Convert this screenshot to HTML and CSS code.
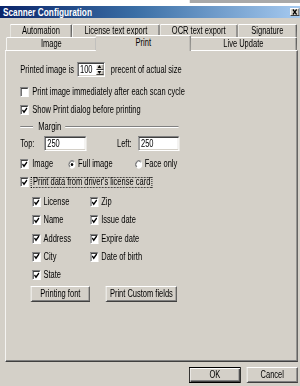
FILE: index.html
```html
<!DOCTYPE html>
<html>
<head>
<meta charset="utf-8">
<link rel="stylesheet" href="styles.css">
</head>
<body>
<div class="window">
<div class="stage">
  <div class="topstrip"><div class="topline"></div></div>
  <div class="titlebar">
    <span class="title">Scanner Configuration</span>
    <span class="close"><svg width="10" height="6" viewBox="0 0 10 6"><path d="M2.5 0.5 L7.5 5.5 M7.5 0.5 L2.5 5.5" stroke="#000" stroke-width="1.6"/></svg></span>
  </div>
  <div class="tabs">
    <div class="tabrow back">
      <div class="tab t-auto">Automation</div>
      <div class="tab t-lic">License text export</div>
      <div class="tab t-ocr">OCR text export</div>
      <div class="tab t-sig">Signature</div>
    </div>
    <div class="tabrow front">
      <div class="tab t-img">Image</div>
      <div class="tab t-print active">Print</div>
      <div class="tab t-live">Live Update</div>
    </div>
  </div>
  <div class="panel">
    <div class="row row-size">
      <span>Printed image is</span>
      <div class="field spin">
        <span class="val">100</span>
        <div class="spinbtns">
          <div class="sb"><svg width="5" height="3" viewBox="0 0 5 3"><path d="M0 3 L2.5 0 L5 3 Z" fill="#000"/></svg></div>
          <div class="sb"><svg width="5" height="3" viewBox="0 0 5 3"><path d="M0 0 L2.5 3 L5 0 Z" fill="#000"/></svg></div>
        </div>
      </div>
      <span>precent of actual size</span>
    </div>
    <div class="cb row-imm"><span class="box"></span><span>Print image immediately after each scan cycle</span></div>
    <div class="cb row-dlg"><span class="box"><svg class="chk" viewBox="0 0 8 7" preserveAspectRatio="none"><path d="M1 3 L3 5.2 L7 1" stroke="#000" stroke-width="1.7" fill="none"/></svg></span><span>Show Print dialog before printing</span></div>
    <div class="sep"><span class="line l1"></span><span class="seplabel">Margin</span><span class="line l2"></span></div>
    <div class="row row-margin">
      <span class="lbl-top">Top:</span><div class="field f-top"><span class="val">250</span></div>
      <span class="lbl-left">Left:</span><div class="field f-left"><span class="val">250</span></div>
    </div>
    <div class="row row-img">
      <div class="grp g1"><span class="box"><svg class="chk" viewBox="0 0 8 7" preserveAspectRatio="none"><path d="M1 3 L3 5.2 L7 1" stroke="#000" stroke-width="1.7" fill="none"/></svg></span><span>Image</span></div>
      <div class="grp g2"><svg class="radio" viewBox="0 0 12 12" preserveAspectRatio="none"><circle cx="6" cy="6" r="5.5" fill="#fff"/><path d="M2.1 9.9 A5.5 5.5 0 0 1 9.9 2.1" stroke="#808080" fill="none"/><path d="M2.8 9.2 A4.5 4.5 0 0 1 9.2 2.8" stroke="#404040" fill="none"/><circle cx="6" cy="6" r="2" fill="#000"/></svg><span>Full image</span></div>
      <div class="grp g3"><svg class="radio" viewBox="0 0 12 12" preserveAspectRatio="none"><circle cx="6" cy="6" r="5.5" fill="#fff"/><path d="M2.1 9.9 A5.5 5.5 0 0 1 9.9 2.1" stroke="#808080" fill="none"/><path d="M2.8 9.2 A4.5 4.5 0 0 1 9.2 2.8" stroke="#404040" fill="none"/></svg><span>Face only</span></div>
    </div>
    <div class="cb row-data"><span class="box"><svg class="chk" viewBox="0 0 8 7" preserveAspectRatio="none"><path d="M1 3 L3 5.2 L7 1" stroke="#000" stroke-width="1.7" fill="none"/></svg></span><span class="focus">Print data from driver's license card</span></div>
    <div class="grid">
      <div class="cb"><span class="box"><svg class="chk" viewBox="0 0 8 7" preserveAspectRatio="none"><path d="M1 3 L3 5.2 L7 1" stroke="#000" stroke-width="1.7" fill="none"/></svg></span><span>License</span></div>
      <div class="cb"><span class="box"><svg class="chk" viewBox="0 0 8 7" preserveAspectRatio="none"><path d="M1 3 L3 5.2 L7 1" stroke="#000" stroke-width="1.7" fill="none"/></svg></span><span>Zip</span></div>
      <div class="cb"><span class="box"><svg class="chk" viewBox="0 0 8 7" preserveAspectRatio="none"><path d="M1 3 L3 5.2 L7 1" stroke="#000" stroke-width="1.7" fill="none"/></svg></span><span>Name</span></div>
      <div class="cb"><span class="box"><svg class="chk" viewBox="0 0 8 7" preserveAspectRatio="none"><path d="M1 3 L3 5.2 L7 1" stroke="#000" stroke-width="1.7" fill="none"/></svg></span><span>Issue date</span></div>
      <div class="cb"><span class="box"><svg class="chk" viewBox="0 0 8 7" preserveAspectRatio="none"><path d="M1 3 L3 5.2 L7 1" stroke="#000" stroke-width="1.7" fill="none"/></svg></span><span>Address</span></div>
      <div class="cb"><span class="box"><svg class="chk" viewBox="0 0 8 7" preserveAspectRatio="none"><path d="M1 3 L3 5.2 L7 1" stroke="#000" stroke-width="1.7" fill="none"/></svg></span><span>Expire date</span></div>
      <div class="cb"><span class="box"><svg class="chk" viewBox="0 0 8 7" preserveAspectRatio="none"><path d="M1 3 L3 5.2 L7 1" stroke="#000" stroke-width="1.7" fill="none"/></svg></span><span>City</span></div>
      <div class="cb"><span class="box"><svg class="chk" viewBox="0 0 8 7" preserveAspectRatio="none"><path d="M1 3 L3 5.2 L7 1" stroke="#000" stroke-width="1.7" fill="none"/></svg></span><span>Date of birth</span></div>
      <div class="cb"><span class="box"><svg class="chk" viewBox="0 0 8 7" preserveAspectRatio="none"><path d="M1 3 L3 5.2 L7 1" stroke="#000" stroke-width="1.7" fill="none"/></svg></span><span>State</span></div>
    </div>
    <div class="btnrow">
      <div class="btn b-font">Printing font</div>
      <div class="btn b-custom">Print Custom fields</div>
    </div>
  </div>
  <div class="footer">
    <div class="btn default b-ok">OK</div>
    <div class="btn b-cancel">Cancel</div>
  </div>
</div>
</div>
</body>
</html>
```

FILE: styles.css
```css
html, body {
  margin: 0;
  padding: 0;
}
body {
  width: 300px;
  height: 386px;
  overflow: hidden;
  background: #d4d0c8;
  font-family: "Liberation Sans", Arial, sans-serif;
  font-size: 10px;
  line-height: 1;
  color: #000;
}
.window {
  width: 300px;
  height: 386px;
  overflow: hidden;
}
.stage {
  width: 400px;
  height: 386px;
  transform: scaleX(0.75);
  transform-origin: 0 0;
  display: flex;
  flex-direction: column;
}
.topstrip {
  height: 6px;
  background: #fff;
  display: flex;
  flex: none;
}
.topline {
  margin-left: 253px;
  flex: 1;
  height: 3px;
  background: #a9a9a9;
}
.titlebar {
  flex: none;
  height: 12px;
  box-sizing: border-box;
  padding: 0 1px 0 4px;
  background: linear-gradient(to right, #0a246a 0%, #3a6ea5 45%, #a6caf0 100%);
  display: flex;
  align-items: center;
  justify-content: space-between;
}
.title {
  color: #fff;
  font-weight: bold;
  font-size: 11px;
  line-height: 12px;
}
.close {
  width: 12px;
  height: 8px;
  box-sizing: border-box;
  background: #d4d0c8;
  border: 1px solid;
  border-color: #fff #404040 #404040 #fff;
  display: flex;
  align-items: center;
  justify-content: center;
}
.close svg { display: block; }
.tabs {
  flex: none;
  margin-top: 6px;
}
.tabrow {
  display: flex;
  height: 13px;
}
.back { padding-left: 13px; }
.front { padding-left: 8px; }
.tab {
  box-sizing: border-box;
  height: 13px;
  border-left: 1px solid #fff;
  border-top: 1px solid #fff;
  border-right: 1px solid #404040;
  box-shadow: inset -1px 0 #808080;
  border-radius: 2px 2px 0 0;
  display: flex;
  align-items: center;
  justify-content: center;
  background: #d4d0c8;
  flex: none;
}
.t-auto { width: 83px; }
.t-lic { width: 117px; }
.t-ocr { width: 104px; }
.t-sig { width: 79px; }
.t-img { width: 121px; }
.t-print { width: 124px; }
.t-live { width: 143px; }
.tab.active {
  width: 128px;
  height: 16px;
  margin: -2px -2px -1px -2px;
  padding-bottom: 1px;
  z-index: 2;
  position: relative;
}
.panel {
  flex: none;
  box-sizing: border-box;
  margin-left: 7px;
  width: 390px;
  height: 312px;
  border-left: 1px solid #fff;
  border-top: 1px solid #fff;
  border-right: 1px solid #404040;
  border-bottom: 1px solid #404040;
  box-shadow: inset -1px -1px #808080;
  padding-left: 19px;
  display: flex;
  flex-direction: column;
}
.row {
  display: flex;
  align-items: center;
  height: 15px;
  flex: none;
}
.row-size { margin-top: 11px; }
.field {
  box-sizing: border-box;
  height: 15px;
  background: #fff;
  border: 1px solid;
  border-color: #808080 #fff #fff #808080;
  box-shadow: inset 1px 1px #404040, inset -1px -1px #d4d0c8;
  display: flex;
  align-items: center;
}
.val { padding-left: 3px; flex: 1; }
.spin {
  width: 37px;
  margin: 0 8px 0 4px;
  align-items: stretch;
}
.spin .val { display: flex; align-items: center; }
.spinbtns {
  width: 10px;
  display: flex;
  flex-direction: column;
  padding: 1px 1px 1px 0;
}
.sb {
  flex: 1;
  box-sizing: border-box;
  background: #d4d0c8;
  border: 1px solid;
  border-color: #fff #404040 #404040 #fff;
  display: flex;
  align-items: center;
  justify-content: center;
}
.sb svg { display: block; }
.cb {
  display: flex;
  align-items: center;
  height: 12px;
  flex: none;
}
.box {
  width: 11px;
  height: 10px;
  box-sizing: border-box;
  background: #fff;
  border: 1px solid;
  border-color: #808080 #fff #fff #808080;
  box-shadow: inset 1px 1px #404040;
  margin-right: 5px;
  flex: none;
  display: flex;
  align-items: center;
  justify-content: center;
}
.chk {
  width: 8px;
  height: 7px;
  display: block;
}
.row-imm { margin-top: 9px; }
.row-dlg { margin-top: 6px; }
.sep {
  display: flex;
  align-items: center;
  height: 10px;
  margin-top: 6px;
  flex: none;
}
.line {
  height: 0;
  border-top: 1px solid #808080;
  border-bottom: 1px solid #fff;
}
.l1 { width: 17px; }
.l2 { width: 151px; }
.seplabel { margin: 0 5px 0 7px; }
.row-margin { margin-top: 4px; }
.lbl-top { width: 32px; }
.f-top { width: 56px; }
.lbl-left { width: 28px; margin-left: 41px; }
.f-left { width: 55px; }
.row-img { margin-top: 7px; height: 12px; }
.grp {
  display: flex;
  align-items: center;
  flex: none;
}
.g1 { width: 64px; }
.g2 { width: 89px; }
.radio {
  width: 10px;
  height: 9px;
  margin-right: 3px;
  flex: none;
}
.row-data { margin-top: 6px; }
.row-data .box { margin-right: 3px; }
.focus {
  border: 1px dotted #000;
  padding: 0 2px;
  height: 11px;
  box-sizing: border-box;
  display: flex;
  align-items: center;
}
.grid {
  display: grid;
  grid-template-columns: 77px auto;
  grid-auto-rows: 12px;
  row-gap: 6.25px;
  padding-left: 16px;
  margin-top: 8px;
  flex: none;
}
.grid .box { margin-right: 4px; }
.btnrow {
  display: flex;
  margin-top: 5px;
  padding-left: 14px;
  gap: 21px;
  flex: none;
}
.btn {
  box-sizing: border-box;
  height: 16px;
  background: #d4d0c8;
  border: 1px solid;
  border-color: #fff #404040 #404040 #fff;
  box-shadow: inset -1px -1px #808080;
  display: flex;
  align-items: center;
  justify-content: center;
  flex: none;
}
.b-font { width: 79px; }
.b-custom { width: 95px; }
.footer {
  flex: none;
  display: flex;
  justify-content: flex-end;
  gap: 8px;
  margin-top: 5px;
  padding-right: 3px;
}
.b-ok { width: 69px; }
.b-cancel { width: 68px; }
.btn.default {
  border: 1px solid #000;
  box-shadow: inset 1px 1px #fff, inset -1px -1px #404040, inset -2px -2px #808080;
}
```
